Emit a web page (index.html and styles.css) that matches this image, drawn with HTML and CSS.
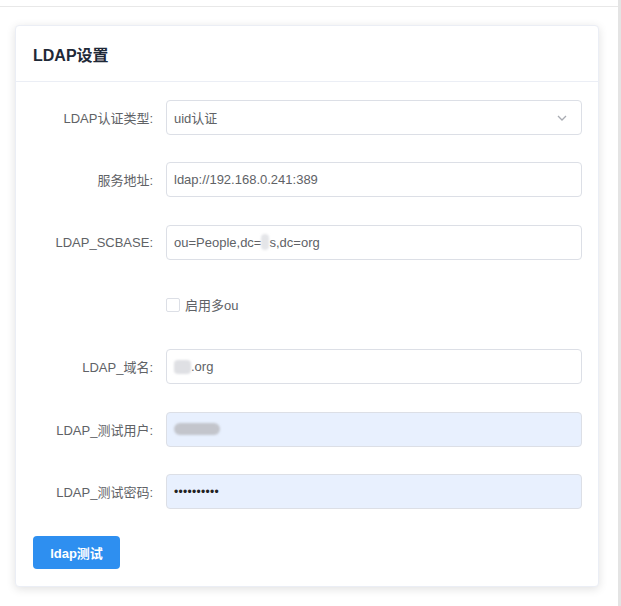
FILE: index.html
```html
<!DOCTYPE html>
<html lang="zh-CN">
<head>
<meta charset="utf-8">
<title>LDAP设置</title>
<link rel="stylesheet" href="styles.css">
</head>
<body>
<div class="layout">
  <main class="main">
    <div class="topbar"></div>
    <section class="card">
      <header class="card-header">LDAP设置</header>
      <div class="card-body">
        <div class="form-item">
          <label class="form-label">LDAP认证类型:</label>
          <div class="control select">
            <span>uid认证</span>
            <svg class="arrow" width="10" height="6" viewBox="0 0 10 6"><path d="M1 1 L5 5 L9 1" fill="none" stroke="#a8abb2" stroke-width="1.3"/></svg>
          </div>
        </div>
        <div class="form-item">
          <label class="form-label">服务地址:</label>
          <div class="control">ldap://192.168.0.241:389</div>
        </div>
        <div class="form-item">
          <label class="form-label">LDAP_SCBASE:</label>
          <div class="control">ou=People,dc=<span class="blob blob-sm"></span>s,dc=org</div>
        </div>
        <div class="form-item">
          <label class="form-label"></label>
          <div class="checkbox-row">
            <span class="checkbox"></span>
            <span class="checkbox-text">启用多ou</span>
          </div>
        </div>
        <div class="form-item">
          <label class="form-label">LDAP_域名:</label>
          <div class="control"><span class="blob blob-md"></span>.org</div>
        </div>
        <div class="form-item">
          <label class="form-label">LDAP_测试用户:</label>
          <div class="control autofill"><span class="blob blob-user"></span></div>
        </div>
        <div class="form-item last">
          <label class="form-label">LDAP_测试密码:</label>
          <div class="control autofill password">••••••••••</div>
        </div>
        <button class="btn-primary" type="button">ldap测试</button>
      </div>
    </section>
  </main>
  <div class="scrollbar"></div>
</div>
</body>
</html>
```

FILE: styles.css
```css
* { box-sizing: border-box; }
html, body {
  margin: 0;
  padding: 0;
  background: #fff;
  font-family: "Liberation Sans", Arial, "Noto Sans CJK SC", sans-serif;
}
.layout {
  display: flex;
  width: 621px;
  height: 606px;
  overflow: hidden;
}
.main {
  width: 618px;
  flex: none;
}
.scrollbar {
  width: 3px;
  flex: none;
  background: #e4e4e4;
}
.topbar {
  height: 7px;
  border-bottom: 1px solid #e8e8e8;
}
.card {
  margin: 18px 0 0 15px;
  width: 584px;
  height: 562px;
  background: #fff;
  border: 1px solid #ebeef5;
  border-radius: 4px;
  box-shadow: 0 2px 10px rgba(0, 0, 0, 0.12);
}
.card-header {
  height: 56px;
  padding: 0 17px;
  display: flex;
  align-items: center;
  border-bottom: 1px solid #ebeef5;
  font-size: 16px;
  font-weight: 600;
  color: #1f2937;
}
.card-body {
  padding: 18px 16px 0 17px;
  display: flex;
  flex-direction: column;
}
.form-item {
  display: flex;
  align-items: center;
  height: 35px;
  margin-bottom: 27.35px;
}
.form-item.last { margin-bottom: 27px; }
.form-label {
  width: 133px;
  flex: none;
  padding-right: 13px;
  text-align: right;
  font-size: 13px;
  color: #606266;
}
.control {
  flex: 1;
  height: 35px;
  border: 1px solid #dcdfe6;
  border-radius: 4px;
  padding: 0 7px;
  display: flex;
  align-items: center;
  font-size: 13px;
  color: #606266;
  white-space: nowrap;
}
.select {
  justify-content: space-between;
  padding-right: 14px;
}
.arrow { display: block; }
.autofill {
  background: #e8f0fe;
  color: #000;
}
.password {
  font-size: 12px;
  letter-spacing: 0.3px;
  color: #222;
}
.blob {
  display: inline-block;
  background: #d8d9dd;
  border-radius: 4px;
  filter: blur(1.2px);
}
.blob-sm { width: 8px; height: 16px; background: #e4e5e8; }
.blob-md { width: 17px; height: 14px; background: #dfe0e4; }
.blob-user { width: 46px; height: 12px; background: #c3c5cc; border-radius: 6px; }
.checkbox-row {
  display: flex;
  align-items: center;
  gap: 5px;
}
.checkbox {
  width: 14px;
  height: 14px;
  border: 1px solid #dcdfe6;
  border-radius: 2px;
  background: #fff;
}
.checkbox-text {
  font-size: 13px;
  color: #606266;
}
.btn-primary {
  align-self: flex-start;
  width: 87px;
  height: 33px;
  border: none;
  border-radius: 4px;
  background: #2e8ff0;
  color: #fff;
  font-family: inherit;
  font-size: 13px;
  font-weight: 700;
  cursor: pointer;
}
```
